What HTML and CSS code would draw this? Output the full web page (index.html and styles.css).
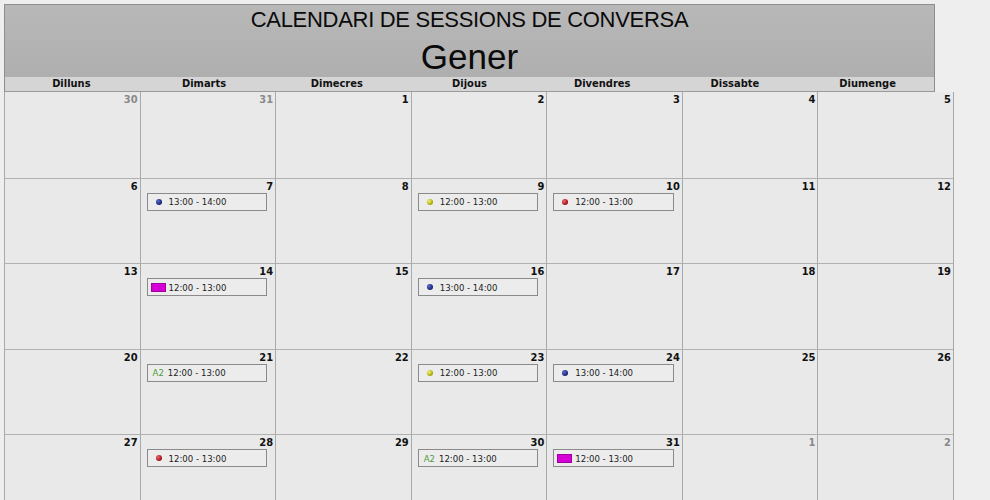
FILE: index.html
```html
<!DOCTYPE html>
<html lang="ca">
<head>
    <meta charset="UTF-8">
    <meta name="viewport" content="width=device-width, initial-scale=1.0">
    <title>Calendari de sessions de conversa</title>
    <link rel="stylesheet" href="styles.css">
</head>
<body>
    <div class="cal-head">
        <div class="cal-title">
            <h1>CALENDARI DE SESSIONS DE CONVERSA</h1>
            <h2>Gener</h2>
        </div>
        <div class="weekdays">
            <div>Dilluns</div>
            <div>Dimarts</div>
            <div>Dimecres</div>
            <div>Dijous</div>
            <div>Divendres</div>
            <div>Dissabte</div>
            <div>Diumenge</div>
        </div>
    </div>

    <div class="month">
        <!-- setmana 1 -->
        <div class="day other"><span class="num">30</span></div>
        <div class="day other"><span class="num">31</span></div>
        <div class="day"><span class="num">1</span></div>
        <div class="day"><span class="num">2</span></div>
        <div class="day"><span class="num">3</span></div>
        <div class="day"><span class="num">4</span></div>
        <div class="day"><span class="num">5</span></div>

        <!-- setmana 2 -->
        <div class="day"><span class="num">6</span></div>
        <div class="day"><span class="num">7</span>
            <div class="event"><span class="dot blue"></span>13:00 - 14:00</div>
        </div>
        <div class="day"><span class="num">8</span></div>
        <div class="day"><span class="num">9</span>
            <div class="event"><span class="dot yellow"></span>12:00 - 13:00</div>
        </div>
        <div class="day"><span class="num">10</span>
            <div class="event"><span class="dot red"></span>12:00 - 13:00</div>
        </div>
        <div class="day"><span class="num">11</span></div>
        <div class="day"><span class="num">12</span></div>

        <!-- setmana 3 -->
        <div class="day"><span class="num">13</span></div>
        <div class="day"><span class="num">14</span>
            <div class="event"><span class="flag"></span>12:00 - 13:00</div>
        </div>
        <div class="day"><span class="num">15</span></div>
        <div class="day"><span class="num">16</span>
            <div class="event"><span class="dot blue"></span>13:00 - 14:00</div>
        </div>
        <div class="day"><span class="num">17</span></div>
        <div class="day"><span class="num">18</span></div>
        <div class="day"><span class="num">19</span></div>

        <!-- setmana 4 -->
        <div class="day"><span class="num">20</span></div>
        <div class="day"><span class="num">21</span>
            <div class="event"><span class="level">A2</span>12:00 - 13:00</div>
        </div>
        <div class="day"><span class="num">22</span></div>
        <div class="day"><span class="num">23</span>
            <div class="event"><span class="dot yellow"></span>12:00 - 13:00</div>
        </div>
        <div class="day"><span class="num">24</span>
            <div class="event"><span class="dot blue"></span>13:00 - 14:00</div>
        </div>
        <div class="day"><span class="num">25</span></div>
        <div class="day"><span class="num">26</span></div>

        <!-- setmana 5 -->
        <div class="day"><span class="num">27</span></div>
        <div class="day"><span class="num">28</span>
            <div class="event"><span class="dot red"></span>12:00 - 13:00</div>
        </div>
        <div class="day"><span class="num">29</span></div>
        <div class="day"><span class="num">30</span>
            <div class="event"><span class="level">A2</span>12:00 - 13:00</div>
        </div>
        <div class="day"><span class="num">31</span>
            <div class="event"><span class="flag"></span>12:00 - 13:00</div>
        </div>
        <div class="day other"><span class="num">1</span></div>
        <div class="day other"><span class="num">2</span></div>
    </div>
</body>
</html>
```

FILE: styles.css
```css
body {
    margin: 4px;
    background-color: #eeeeee;
    color: #111;
    font-family: "DejaVu Sans Condensed", "DejaVu Sans", sans-serif;
    font-stretch: condensed;
}
.cal-head {
    width: 929px;
    border: 1px solid #8e8e8e;
    border-bottom: none;
}
.cal-title {
    padding: 2px 0 1px;
    text-align: center;
    background: linear-gradient(#b8b8b8, #afafaf);
    font-family: "Liberation Sans", Arial, sans-serif;
    font-stretch: normal;
    color: #0a0a0a;
}
.cal-title h1 {
    margin: 0;
    font-size: 22px;
    font-weight: normal;
    letter-spacing: -0.3px;
    line-height: 26px;
}
.cal-title h2 {
    margin: 5px 0 0;
    font-size: 35px;
    font-weight: normal;
    line-height: 38px;
}
.weekdays {
    display: grid;
    grid-template-columns: repeat(7, 1fr);
    background-color: #d5d5d5;
    border-bottom: 1px solid #9a9a9a;
}
.weekdays div {
    text-align: center;
    font-size: 11px;
    font-weight: bold;
    line-height: 14px;
}
.month {
    display: grid;
    grid-template-columns: repeat(7, 1fr);
    grid-auto-rows: 85.6px;
    width: 949px;
    border-right: 1px solid #a9a9a9;
}
.day {
    border-left: 1px solid #a9a9a9;
    border-top: 1px solid #b0b0b0;
    background-color: #e9e9e9;
}
.month .day:nth-child(-n+7) {
    border-top: none;
}
.num {
    display: block;
    text-align: right;
    padding: 1px 2px 0 0;
    font-size: 11px;
    font-weight: bold;
    line-height: 13px;
    color: #111;
}
.day.other .num {
    color: #8a8a8a;
}
.event {
    display: flex;
    align-items: center;
    height: 16px;
    margin: 0 8px 0 6px;
    border: 1px solid #8a8a8a;
    background-color: #ececec;
    font-size: 9.5px;
    color: #1c1c1c;
}
.dot {
    width: 6px;
    height: 6px;
    margin: 0 7px 0 8px;
    border-radius: 50%;
}
.dot.blue {
    background: radial-gradient(circle at 35% 35%, #5a6ad0, #14206e 70%);
}
.dot.yellow {
    background: radial-gradient(circle at 35% 35%, #f4f47a, #a3a200 70%);
}
.dot.red {
    background: radial-gradient(circle at 35% 35%, #f06a6a, #9c0c14 70%);
}
.flag {
    width: 13px;
    height: 7px;
    margin: 0 3px 0 3px;
    background-color: #d600d6;
    border: 1px solid #a000a0;
}
.level {
    margin: 0 4px 0 5px;
    color: #4f9a3c;
}
```
